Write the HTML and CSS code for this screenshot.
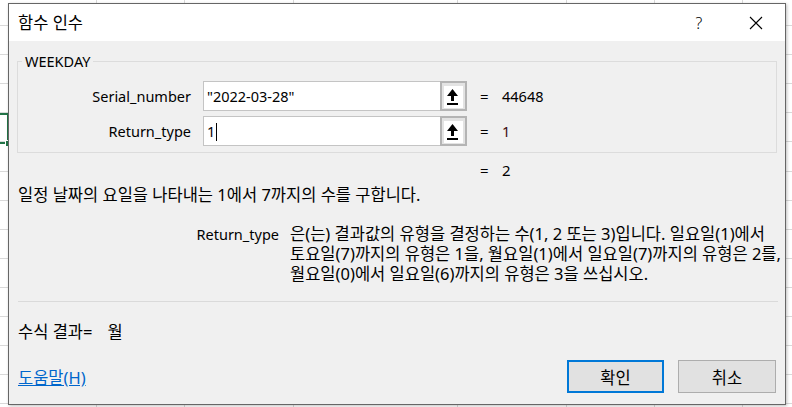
FILE: index.html
```html
<!DOCTYPE html>
<html lang="ko">
<head>
    <meta charset="UTF-8">
    <title>함수 인수</title>
    <link rel="stylesheet" href="styles.css">
</head>
<body>
<div class="sel"><span class="handle"></span></div>
<div class="dlg">
    <div class="titlebar">
        <div class="ttl">함수 인수</div>
        <div class="tbtn help">?</div>
        <div class="tbtn close">
            <svg width="14" height="14" viewBox="0 0 14 14"><path d="M1 1L13 13M13 1L1 13" stroke="#000" stroke-width="1.1" fill="none"/></svg>
        </div>
    </div>
    <div class="body">
        <fieldset class="grp">
            <legend>WEEKDAY</legend>
            <div class="arg">
                <div class="lbl">Serial_number</div>
                <div class="box">
                    <div class="txt">"2022-03-28"</div>
                    <div class="pick"><span class="ico"><svg width="18" height="21" viewBox="0 0 18 21"><path d="M8.5 3L3 10H7V15H10V10H14Z" fill="#000"/><rect x="3" y="17" width="11" height="2" fill="#000"/></svg></span></div>
                </div>
                <div class="eq">=</div>
                <div class="val">44648</div>
            </div>
            <div class="arg">
                <div class="lbl">Return_type</div>
                <div class="box">
                    <div class="txt">1<span class="caret"></span></div>
                    <div class="pick"><span class="ico"><svg width="18" height="21" viewBox="0 0 18 21"><path d="M8.5 3L3 10H7V15H10V10H14Z" fill="#000"/><rect x="3" y="17" width="11" height="2" fill="#000"/></svg></span></div>
                </div>
                <div class="eq">=</div>
                <div class="val red">1</div>
            </div>
        </fieldset>
        <div class="result"><span class="eq">=</span>2</div>
        <div class="desc">일정 날짜의 요일을 나타내는 1에서 7까지의 수를 구합니다.</div>
        <div class="argdesc">
            <div class="aname">Return_type</div>
            <div class="atext">은(는) 결과값의 유형을 결정하는 수(1, 2 또는 3)입니다. 일요일(1)에서<br>토요일(7)까지의 유형은 1을, 월요일(1)에서 일요일(7)까지의 유형은 2를,<br>월요일(0)에서 일요일(6)까지의 유형은 3을 쓰십시오.</div>
        </div>
        <div class="sep"></div>
        <div class="formula">수식 결과=<span class="fv">월</span></div>
        <div class="foot">
            <a class="link" href="#">도움말(H)</a>
            <div class="btns">
                <div class="btn ok">확인</div>
                <div class="btn">취소</div>
            </div>
        </div>
    </div>
</div>
</body>
</html>
```

FILE: styles.css
```css
*{
    margin:0;
    padding:0;
    box-sizing: border-box;
}
body{
    width: 792px;
    height: 407px;
    overflow: hidden;
    font-family: "Noto Sans", "Noto Sans CJK KR", sans-serif;
    font-size: 15px;
    color: #000;
    background-color: #fff;
    background-image:
        linear-gradient(#d9d9d9,#d9d9d9),
        linear-gradient(#d9d9d9,#d9d9d9),
        linear-gradient(#d9d9d9,#d9d9d9),
        linear-gradient(#d9d9d9,#d9d9d9),
        linear-gradient(#d9d9d9,#d9d9d9),
        linear-gradient(#d9d9d9,#d9d9d9),
        linear-gradient(#d9d9d9,#d9d9d9),
        repeating-linear-gradient(to bottom, transparent 0, transparent 28.1px, #d9d9d9 28.1px, #d9d9d9 29.1px);
    background-size: 1px 100%, 1px 100%, 1px 100%, 1px 100%, 1px 100%, 1px 100%, 1px 100%, 100% 100%;
    background-position: 96px 0, 184px 0, 293px 0, 457px 0, 566px 0, 654px 0, 742px 0, 0 -3px;
    background-repeat: no-repeat, no-repeat, no-repeat, no-repeat, no-repeat, no-repeat, no-repeat, repeat;
    position: relative;
}
.sel{
    position: absolute;
    left: -60px;
    top: 113px;
    width: 69px;
    height: 31px;
    border: 2px solid #217346;
}
.sel .handle{
    position: absolute;
    right: -5px;
    bottom: -5px;
    width: 7px;
    height: 7px;
    background: #217346;
    border: 1px solid #fff;
}
.dlg{
    position: relative;
    z-index: 1;
    margin: 3px 0 0 8px;
    width: 778px;
    height: 402px;
    border: 1px solid #666;
    background: #f0f0f0;
    box-shadow: 1px 1px 3px rgba(0,0,0,.25);
}
.titlebar{
    height: 37px;
    background: #fff;
    display: flex;
    align-items: center;
    padding-left: 9px;
}
.ttl{
    flex: 1;
    line-height: 20px;
    font-size: 16.5px;
    padding-top: 1px;
}
.tbtn{
    width: 46px;
    height: 37px;
    display: flex;
    align-items: center;
    justify-content: center;
}
.help{
    font-size: 16px;
    font-weight: 300;
    margin-right: 11px;
}
.close{
    margin-right: 6px;
}
.body{
    padding-top: 10px;
}
.grp{
    margin: 0 8px;
    border: 1px solid #dcdcdc;
    padding: 10px 0 6px 4px;
}
.grp legend{
    padding: 0 3px;
    line-height: 20px;
    font-size: 14.5px;
}
.arg{
    display: flex;
    align-items: center;
    height: 30px;
}
.arg + .arg{
    margin-top: 5px;
}
.lbl{
    width: 169px;
    text-align: right;
    font-size: 14.5px;
}
.box{
    margin-left: 12px;
    width: 264px;
    height: 30px;
    display: flex;
}
.txt{
    flex: 1;
    background: #fff;
    border: 1px solid #c4c4c4;
    border-right: none;
    padding-left: 3px;
    line-height: 28px;
    font-size: 14.5px;
}
.caret{
    display: inline-block;
    width: 1px;
    height: 18px;
    background: #000;
    margin-left: 1px;
    vertical-align: -4px;
}
.pick{
    width: 27px;
    border: 2px solid #b4b4b4;
    background: #e3e3e3;
    padding: 2px 1px 2px 2px;
}
.ico{
    display: block;
    width: 19px;
    height: 22px;
    background: #fff;
}
.ico svg{
    display: block;
    margin-top: 1px;
}
.eq{
    display: inline-block;
    margin-left: 13px;
    width: 22px;
}
.val{
    font-size: 14.5px;
}
.red{
    color: #3c0a0a;
}
.result{
    margin-top: 7px;
    padding-left: 458px;
    line-height: 20px;
}
.desc{
    margin-top: 5px;
    padding-left: 9px;
    line-height: 20px;
    font-size: 16.5px;
}
.argdesc{
    margin-top: 19px;
    display: flex;
    line-height: 20px;
}
.aname{
    width: 270px;
    text-align: right;
    font-size: 14.5px;
}
.atext{
    margin-left: 11px;
    white-space: nowrap;
    font-size: 16.5px;
}
.sep{
    margin: 17px 7px 0 9px;
    height: 1px;
    background: #dadada;
}
.formula{
    margin-top: 20px;
    padding-left: 9px;
    line-height: 20px;
    font-size: 16.5px;
}
.fv{
    margin-left: 15px;
}
.foot{
    margin-top: 18px;
    display: flex;
    align-items: center;
    padding: 0 9px;
    font-size: 16.5px;
}
.link{
    color: #0066cc;
    text-decoration: underline;
    flex: 1;
}
.btns{
    display: flex;
    gap: 14px;
}
.btn{
    width: 98px;
    height: 33px;
    border: 1px solid #adadad;
    background: #e1e1e1;
    display: flex;
    align-items: center;
    justify-content: center;
}
.btn.ok{
    width: 97px;
    border: 2px solid #0078d7;
}
```
